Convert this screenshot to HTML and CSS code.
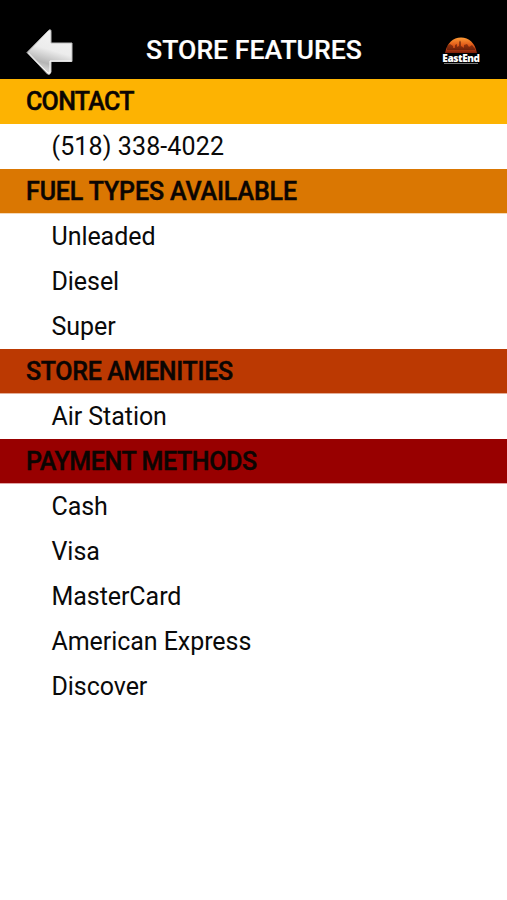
FILE: index.html
```html
<!DOCTYPE html>
<html lang="en">
<head>
<meta charset="utf-8">
<title>Store Features</title>
<link rel="stylesheet" href="styles.css">
</head>
<body>
<header class="bar">
  <svg class="back" viewBox="0 0 48 48" aria-label="Back">
    <defs>
      <linearGradient id="metal" x1=".65" y1="0" x2=".35" y2="1"><stop offset="0" stop-color="#f4f4f4"/><stop offset=".45" stop-color="#ececec"/><stop offset=".75" stop-color="#b5b5b5"/><stop offset="1" stop-color="#eee"/></linearGradient>
    </defs>
    <path d="M1 24.500 22.500 2.500Q25 .5 25 3.500V15H46V33.500H25V44Q24 47.500 21.500 46Z" fill="url(#metal)" stroke="#bbb" stroke-width="1" stroke-linejoin="round"/>
    <path d="M2.500 25 22 45H24V33H45.500" fill="none" stroke="#fff" stroke-width="1"/>
  </svg>
  <h1 class="title"><span class="label">STORE FEATURES</span></h1>
  <div class="logo">
    <svg class="sun" viewBox="0 0 38 16">
      <defs><linearGradient id="sunset" x1="0" y1="0" x2="0" y2="1"><stop offset="0" stop-color="#ff9c36"/><stop offset=".5" stop-color="#df5818"/><stop offset="1" stop-color="#7c1d08"/></linearGradient></defs>
      <path d="M3 16C5 6 11 .5 19 .5S33 6 35 16Z" fill="url(#sunset)"/>
      <path d="M5 12V9L8 7L11 9V11H13V8L15 7V10L17 9V5L18 3.500L19 5V9L22 11V8L25 7L27 10L30 8L33 12V13H5Z" fill="#3b0b04" opacity=".5"/>
    </svg>
    <span class="brand">EastEnd</span>
    <span class="underline"></span>
  </div>
</header>
<main>
  <h2 class="head contact"><span class="label">CONTACT</span></h2>
  <p class="row phone">(518) 338-4022</p>
  <h2 class="head fuel"><span class="label">FUEL TYPES AVAILABLE</span></h2>
  <p class="row">Unleaded</p>
  <p class="row">Diesel</p>
  <p class="row">Super</p>
  <h2 class="head amenities"><span class="label">STORE AMENITIES</span></h2>
  <p class="row">Air Station</p>
  <h2 class="head payment"><span class="label">PAYMENT METHODS</span></h2>
  <p class="row">Cash</p>
  <p class="row">Visa</p>
  <p class="row">MasterCard</p>
  <p class="row">American Express</p>
  <p class="row">Discover</p>
</main>
</body>
</html>
```
FILE: styles.css
```css
* { box-sizing: border-box; margin: 0; }
body { background: #fff; color: #0a0a0a; font-family: Roboto, sans-serif; }
.bar { height: 79px; background: #000; display: grid; grid-template-columns: 48px 1fr 38px; padding: 28px 27px 0 26px; }
.back { width: 48px; height: 48px; }
.title { color: #fff; font-size: 26.6px; font-weight: 500; line-height: 44px; text-align: center; padding-right: 8px; white-space: nowrap; -webkit-text-stroke: .2px; }
.logo { display: flex; flex-direction: column; align-items: center; padding-top: 9px; }
.sun { width: 38px; height: 16px; }
.brand { color: #fff; font-family: "Open Sans", sans-serif; font-size: 10px; font-weight: 800; line-height: 10px; letter-spacing: -.4px; }
.underline { width: 34px; height: 1px; background: #777; }
.head { height: 45px; padding-left: 26px; line-height: 46px; font-size: 25px; font-weight: 500; color: #0b0502; border-bottom: 1px solid; -webkit-text-stroke: .45px; }
.row { height: 45px; padding-left: 51.500px; line-height: 46px; font-size: 25px; letter-spacing: -.06px; }
.phone { letter-spacing: .12px; }
.contact { background: #fdb302; border-color: #fdb302; letter-spacing: -.7px; }
.fuel { background: #da7702; border-color: #f5d9b8; letter-spacing: -.14px; }
.amenities { background: #bb3902; border-color: #e3ae98; letter-spacing: -.34px; }
.payment { background: #980000; border-color: #e0a5a5; letter-spacing: -.4px; }
```
